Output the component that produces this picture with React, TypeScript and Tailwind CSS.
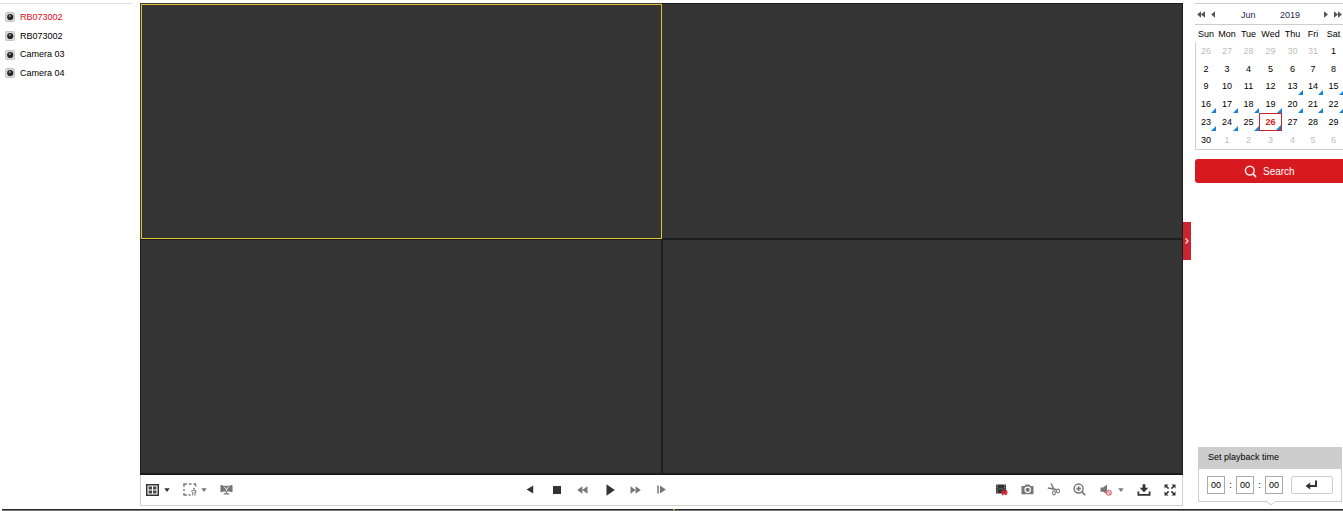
import React from "react";

const cameras = ["RB073002", "RB073002", "Camera 03", "Camera 04"];
const weekdays = ["Sun", "Mon", "Tue", "Wed", "Thu", "Fri", "Sat"];
const weeks = [
  [26, 27, 28, 29, 30, 31, 1],
  [2, 3, 4, 5, 6, 7, 8],
  [9, 10, 11, 12, 13, 14, 15],
  [16, 17, 18, 19, 20, 21, 22],
  [23, 24, 25, 26, 27, 28, 29],
  [30, 1, 2, 3, 4, 5, 6],
];

function CameraIcon() {
  return (
    <svg width="10" height="10" viewBox="0 0 10 10">
      <rect x="0.5" y="0.5" width="9" height="9" rx="1" fill="#d9d9d9" stroke="#c4c4c4" />
      <circle cx="5.2" cy="5" r="3.1" fill="#262626" />
      <circle cx="4.8" cy="4" r="1" fill="#a8a8a8" />
    </svg>
  );
}

function CameraList() {
  return (
    <aside className="w-[140px] shrink-0 pt-[3px]">
      <div className="h-px w-[133px] bg-[#dedede]" />
      <ul className="pt-1 pl-[5px]">
        {cameras.map((name, i) => (
          <li key={i} className={`flex h-[18.7px] items-center gap-[5px] ${i === 0 ? "text-[#e00a14]" : "text-black"}`}>
            <CameraIcon />
            <span>{name}</span>
          </li>
        ))}
      </ul>
    </aside>
  );
}

function Caret({ color }: { color: string }) {
  return (
    <svg width="6" height="4" viewBox="0 0 6 4">
      <path d="M0.3 0.2H5.7L3 4Z" fill={color} />
    </svg>
  );
}

function Toolbar() {
  return (
    <div className="flex h-[31px] items-center border-x border-b border-[#cfcfcf] bg-white pb-px">
      <div className="flex w-[383px] items-center pl-[5px]">
        <svg width="13" height="12" viewBox="0 0 13 12">
          <rect x="0.75" y="0.75" width="11.5" height="10.5" fill="white" stroke="#333" strokeWidth="1.5" />
          <path d="M2.6 2.6H6V5.4H2.6ZM7 2.6H10.4V5.4H7ZM2.6 6.6H6V9.4H2.6ZM7 6.6H10.4V9.4H7Z" fill="#444" />
        </svg>
        <span className="ml-[5px] flex w-[19px]"><Caret color="#333" /></span>
        <svg width="14" height="13" viewBox="0 0 14 13">
          <path d="M1 4V1H4M6 1H8.5M10.5 1H12.5V3.5M1 6V8M1 10V12H4M5.5 12H7.5" fill="none" stroke="#777" strokeWidth="1.4" />
          <circle cx="11" cy="5.8" r="1" fill="#888" />
          <path d="M8.2 8.5L10 7.5H12.6V10M9.7 9V12.6M12 9V12.6" fill="none" stroke="#888" strokeWidth="1.2" />
        </svg>
        <span className="ml-[4px] flex w-[18px]"><Caret color="#777" /></span>
        <svg width="13" height="11" viewBox="0 0 14 11" className="ml-px">
          <path d="M1 1L4 2H10L13 1V8L10 7.2H4L1 8Z" fill="#777" stroke="#777" />
          <path d="M4.8 2.7L7 5.5L9.2 2.7M7 5V8" fill="none" stroke="white" strokeWidth="1" />
          <path d="M7 7V10M4 10.3H10" fill="none" stroke="#777" strokeWidth="1.3" />
        </svg>
      </div>
      <div className="flex flex-1 items-center">
        <svg width="8" height="9" viewBox="0 0 8 9" className="ml-[2px]"><path d="M7.2 0.5V8.5L0.6 4.5Z" fill="#333" /></svg>
        <div className="ml-[19px] size-2 bg-[#333]" />
        <svg width="11" height="8" viewBox="0 0 11 8" className="ml-[16px]"><path d="M5.4 0.3V7.7L0.2 4ZM10.5 0.3V7.7L5.2 4Z" fill="#777" /></svg>
        <svg width="9" height="12" viewBox="0 0 9 12" className="ml-[18px]"><path d="M0.5 0.2V11.8L8.8 6Z" fill="#333" /></svg>
        <svg width="11" height="8" viewBox="0 0 11 8" className="ml-[15px]"><path d="M0.5 0.3V7.7L5.6 4ZM5.6 0.3V7.7L10.8 4Z" fill="#777" /></svg>
        <svg width="9" height="9" viewBox="0 0 9 9" className="ml-[16px]"><path d="M0.3 0.5H1.8V8.5H0.3ZM3 0.5L8.8 4.5L3 8.5Z" fill="#777" /></svg>
      </div>
      <div className="flex items-center pr-[6px]">
        <svg width="14" height="12" viewBox="0 0 14 12" className="mr-[12px]">
          <path d="M1 0.5H11V9.5H1Z" fill="#333" />
          <path d="M2.2 1V9.5M9.8 1V6" stroke="#bbb" strokeWidth="1" strokeDasharray="1 1.2" />
          <path d="M3.5 4.8H8.5" stroke="#68736f" strokeWidth="0.7" />
          <path d="M7.2 6.4L11.5 11M11.8 6.4L7.2 11M6.6 8.7H12.5" stroke="#dc2434" strokeWidth="1.7" />
        </svg>
        <svg width="13" height="11" viewBox="0 0 13 11" className="mr-[13px]">
          <path d="M0.5 2H3.5L4.5 0.5H8.5L9.5 2H12.5V10.3H0.5Z" fill="#777" />
          <circle cx="6.7" cy="5.8" r="2.7" fill="#777" stroke="white" strokeWidth="1.2" />
        </svg>
        <svg width="14" height="13" viewBox="0 0 14 13" className="mr-[12px]">
          <path d="M4 0.5L7.4 7.2M0.8 5L9 6.6" fill="none" stroke="#777" strokeWidth="1.5" />
          <ellipse cx="7" cy="9.8" rx="1.4" ry="2.1" fill="none" stroke="#777" strokeWidth="1.1" />
          <ellipse cx="10.9" cy="8" rx="1.6" ry="1.9" fill="none" stroke="#777" strokeWidth="1.1" />
        </svg>
        <svg width="13" height="13" viewBox="0 0 13 13" className="mr-[14px]">
          <circle cx="5.6" cy="5.6" r="4.5" fill="none" stroke="#777" strokeWidth="1.5" />
          <path d="M3.3 5.6H7.9M5.6 3.3V7.9M8.9 8.9L12.3 12.3" fill="none" stroke="#777" strokeWidth="1.6" />
        </svg>
        <svg width="12" height="12" viewBox="0 0 12 12" className="mr-[6px]">
          <path d="M0.5 3.5H3L7 0.5V10.5L3 7.8H0.5Z" fill="#777" />
          <circle cx="8.9" cy="8.7" r="2.4" fill="#fff" stroke="#e6777d" strokeWidth="1.2" />
          <path d="M7.2 7L10.6 10.4" stroke="#e6777d" strokeWidth="1.1" />
        </svg>
        <span className="mr-[13px]"><Caret color="#777" /></span>
        <svg width="14" height="12" viewBox="0 0 14 12" className="mr-[13px]">
          <path d="M5.6 0.3H8.4V3.8H11.3L7 8.2L2.7 3.8H5.6Z" fill="#333" />
          <path d="M1.4 7.5V10.8H12.6V7.5" fill="none" stroke="#333" strokeWidth="1.8" />
        </svg>
        <svg width="12" height="12" viewBox="0 0 12 12">
          <path d="M0.5 0.5H4.5L0.5 4.5ZM7.5 0.5H11.5V4.5ZM0.5 7.5L4.5 11.5H0.5ZM11.5 7.5V11.5H7.5Z" fill="#333" />
          <path d="M2 2L4.6 4.6M10 2L7.4 4.6M2 10L4.6 7.4M10 10L7.4 7.4" stroke="#333" strokeWidth="1.5" />
        </svg>
      </div>
    </div>
  );
}

function VideoArea() {
  return (
    <main className="flex w-[1043px] shrink-0 flex-col pt-[3px]">
      <div className="grid h-[472px] grid-cols-[522px_521px] grid-rows-[236px_235px] border-b border-[#181a1c] bg-[#343434]">
        <div className="border-t border-l border-[#3a3d3f]"><div className="h-[235px] border border-[#e2c22e]" /></div>
        <div className="border-y border-r border-[#1b1d1e]" />
        <div className="border-x border-y border-[#1b1d1e]" />
        <div className="border border-[#1b1d1e]" />
      </div>
      <Toolbar />
    </main>
  );
}

function hasRecording(week: number, day: number) {
  return (week === 2 && day > 3) || week === 3 || (week === 4 && day < 4);
}

function Calendar() {
  return (
    <section className="w-[149px]">
      <div className="flex h-[22px] items-center border-y border-[#cdcdcd] pt-px">
        <svg width="8" height="7" viewBox="0 0 8 7" className="ml-[2px]"><path d="M4 0.2V6.8L0.2 3.5ZM8 0.2V6.8L3.9 3.5Z" fill="#555" /></svg>
        <svg width="4" height="7" viewBox="0 0 4 7" className="ml-[6px]"><path d="M4 0.2V6.8L0.2 3.5Z" fill="#555" /></svg>
        <span className="ml-[26px] w-[39px] pt-px text-[#29294b]">Jun</span>
        <span className="w-[44px] pt-px text-[#29294b]">2019</span>
        <svg width="4" height="7" viewBox="0 0 4 7"><path d="M0 0.2V6.8L4 3.5Z" fill="#555" /></svg>
        <svg width="8" height="7" viewBox="0 0 8 7" className="ml-[6px]"><path d="M0 0.2V6.8L4 3.5ZM4 0.2V6.8L8 3.5Z" fill="#555" /></svg>
      </div>
      <div className="grid h-[17px] grid-cols-[20px_22px_21px_23px_21px_20px_21px] items-center justify-items-center pt-px pl-px">
        {weekdays.map((d) => <span key={d}>{d}</span>)}
      </div>
      <div className="grid h-[108px] grid-cols-[20px_22px_21px_23px_21px_20px_21px] grid-rows-[18px_18px_17px_18px_18px_18px] border-b border-l border-[#cdcdcd]">
        {weeks.flatMap((week, w) =>
          week.map((n, d) => {
            const outside = (w === 0 && d < 6) || (w === 5 && d > 0);
            const selected = w === 4 && d === 3;
            return (
              <div key={`${w}-${d}`} className={`relative flex items-center justify-center ${selected ? "border border-[#c5242c] font-bold text-[#d71920]" : outside ? "text-[#bdbdbd]" : "text-black"}`}>
                {n}
                {hasRecording(w, d) && (
                  <span className="absolute right-0 bottom-0 size-[5px] bg-[#1684d2] [clip-path:polygon(100%_0,100%_100%,0_100%)]" />
                )}
              </div>
            );
          })
        )}
      </div>
    </section>
  );
}

function TimeBox() {
  return <div className="flex h-[18px] w-[18px] items-center justify-center border border-[#aaa]">00</div>;
}

function PlaybackTime() {
  return (
    <section className="relative ml-[3px] h-[55px] w-[144px] border border-[#cdcdcd]">
      <div className="h-[21px] bg-[#cdcdcd] pl-[9px] leading-[19px]">Set playback time</div>
      <div className="flex items-center pt-[7px] pl-[8px]">
        <TimeBox />
        <span className="w-[11px] text-center">:</span>
        <TimeBox />
        <span className="w-[11px] text-center">:</span>
        <TimeBox />
        <button className="ml-[8px] flex h-[18px] w-[42px] items-center justify-center rounded-[2px] border border-[#cdcdcd]">
          <svg width="13" height="10" viewBox="0 0 13 10" className="-ml-[2px]">
            <path d="M4 6H11V0.5" fill="none" stroke="#333" strokeWidth="2" />
            <path d="M0.5 6L5.2 2.4V9.6Z" fill="#333" />
          </svg>
        </button>
      </div>
      <svg width="10" height="5" viewBox="0 0 10 5" className="absolute bottom-[-5px] left-[67px]">
        <path d="M0 0L5 4L10 0" fill="white" stroke="#cdcdcd" />
      </svg>
    </section>
  );
}

export default function App() {
  return (
    <div className="flex h-[511px] w-[1343px] flex-col overflow-hidden bg-white font-['Liberation_Sans',Arial,sans-serif] text-[9px] leading-[11px] text-black">
      <div className="flex h-[509px]">
        <CameraList />
        <VideoArea />
        <div className="mt-[222px] flex h-[38px] w-2 shrink-0 items-center justify-center bg-[#cb2430]">
          <svg width="4" height="6" viewBox="0 0 4 6"><path d="M0.6 0.5L3 3L0.6 5.5" fill="none" stroke="#fad5d6" strokeWidth="1.4" /></svg>
        </div>
        <aside className="ml-1 flex w-[149px] shrink-0 flex-col pt-[3px]">
          <Calendar />
          <button className="mt-[9px] flex h-[24px] w-[151px] items-center rounded-[3px] bg-[#d71920] pl-[49px] text-[10px] text-white">
            <svg width="13" height="13" viewBox="0 0 13 13" className="mr-[6px]">
              <circle cx="5.8" cy="5.6" r="4.4" fill="none" stroke="#fbe4e5" strokeWidth="1.6" />
              <path d="M8.8 8.7L12 12" stroke="#fbe4e5" strokeWidth="1.8" />
            </svg>
            Search
          </button>
          <div className="mt-auto mb-[7px]"><PlaybackTime /></div>
        </aside>
      </div>
      <div className="ml-[2px] h-[2px] border-b border-[#777] bg-[#29292b]">
        <div className="ml-[671px] h-px w-[2px] bg-[#b8a94a]" />
      </div>
    </div>
  );
}
